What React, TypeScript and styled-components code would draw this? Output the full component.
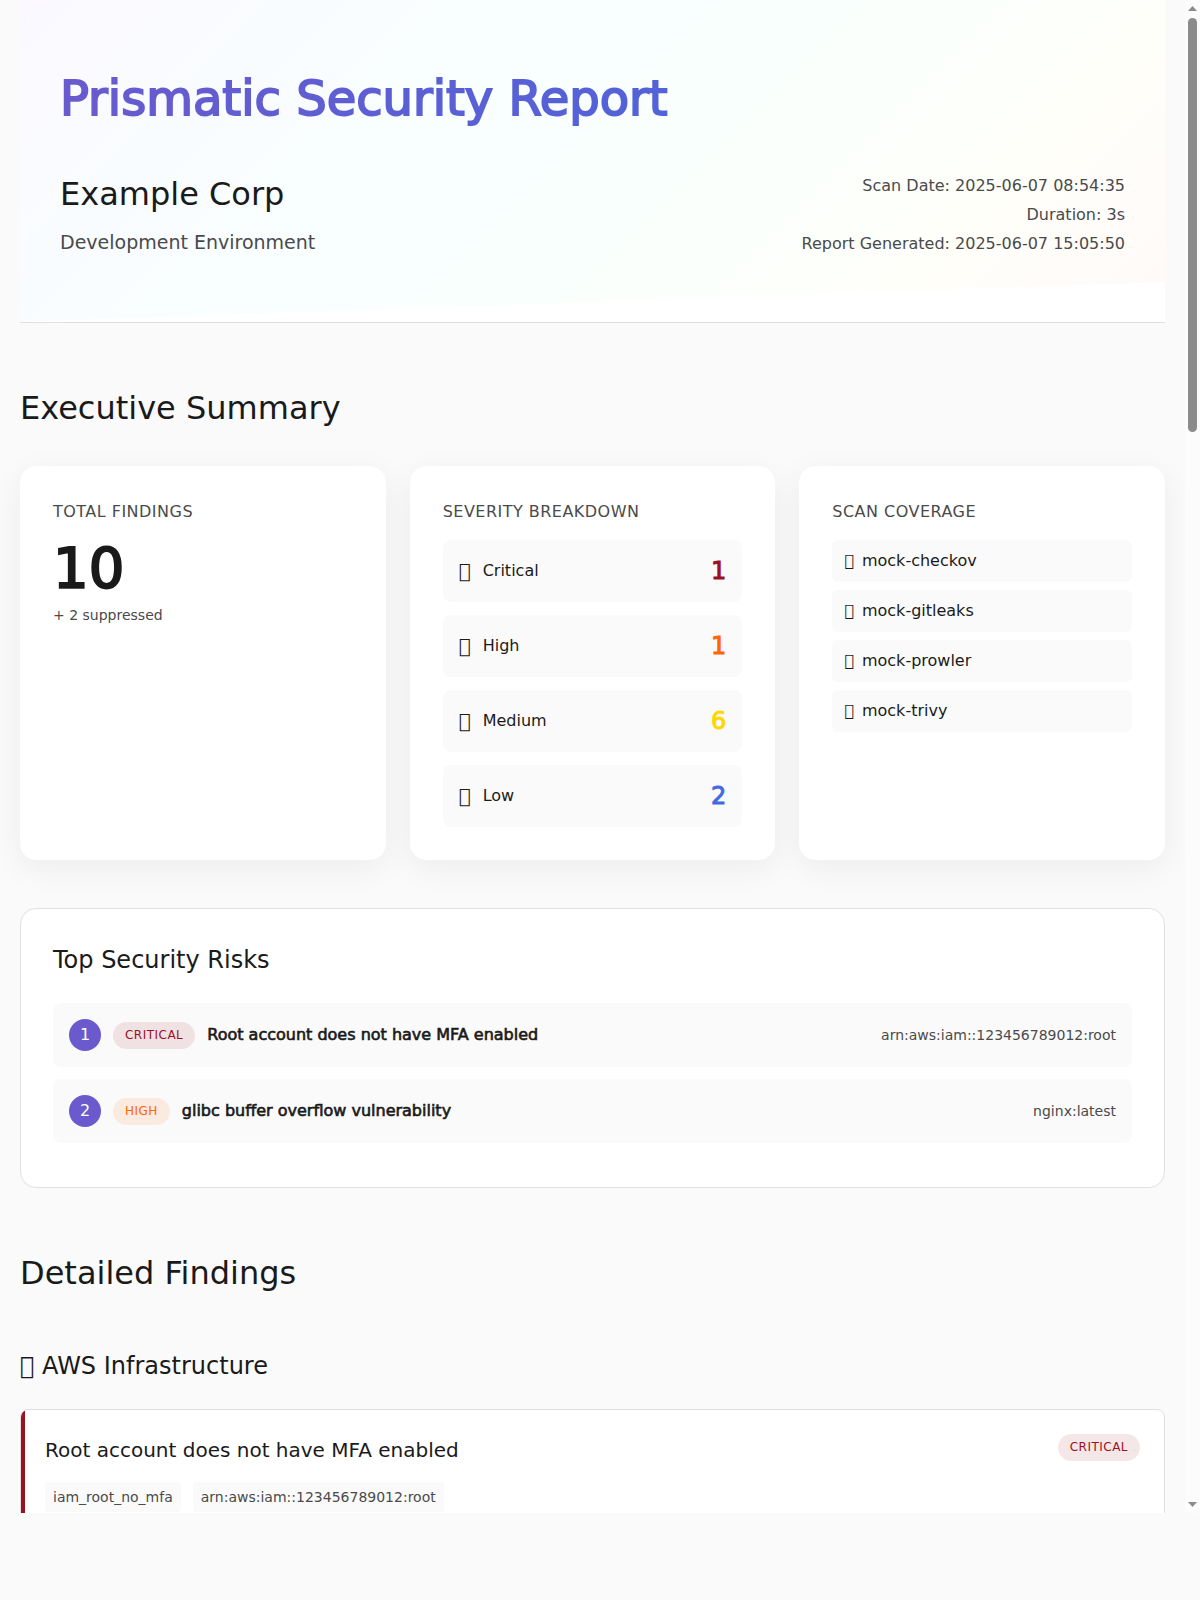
import React from "react";
import styled, { createGlobalStyle, css } from "styled-components";

type Level = "critical" | "high" | "medium" | "low";

const levelColor: Record<Level, string> = {
  critical: "#9b111e",
  high: "#ff6600",
  medium: "#ffd700",
  low: "#4169e1",
};

const levelTint: Record<Level, string> = {
  critical: "rgba(155, 17, 30, 0.1)",
  high: "rgba(255, 102, 0, 0.1)",
  medium: "rgba(255, 215, 0, 0.1)",
  low: "rgba(65, 105, 225, 0.1)",
};

const semibold = css`
  -webkit-text-stroke: 0.04em currentColor;
`;

const GlobalStyle = createGlobalStyle`
  *, *::before, *::after { box-sizing: border-box; }
  body {
    margin: 0;
    background: #fafafa;
    color: #1a1a1a;
    font-family: "DejaVu Sans", sans-serif;
    font-size: 16px;
    line-height: 26px;
  }
  h1, h2, h3, h4, p, ul, ol { margin: 0; padding: 0; font-weight: 400; }
  ul, ol { list-style: none; }
`;

const Frame = styled.div`
  display: flex;
  height: calc(100vh - 87px);
  overflow: hidden;
`;

const Page = styled.main`
  flex: 1;
  min-width: 0;
  padding: 0 20px;
`;

const Header = styled.header`
  position: relative;
  padding: 60px 40px 64px;
  border-bottom: 1px solid #e0e0e0;
  background: linear-gradient(135deg, #fbf9ff 0%, #f9fcff 20%, #f9ffff 40%, #fafffc 60%, #fffffa 80%, #fff9f8 100%);

  &::after {
    content: "";
    position: absolute;
    right: 0;
    bottom: 0;
    left: 0;
    height: 40px;
    background: #ffffff;
    clip-path: polygon(0 100%, 100% 0, 100% 100%);
  }
`;

const ReportTitle = styled.h1`
  ${semibold}
  margin-bottom: 32px;
  color: transparent;
  font-size: 48px;
  line-height: 77px;
  background: linear-gradient(135deg, #6a5acd 0%, #4169e1 100%);
  -webkit-background-clip: text;
  background-clip: text;
`;

const HeaderInfo = styled.div`
  display: flex;
  align-items: flex-end;
  justify-content: space-between;
  gap: 32px;
`;

const Company = styled.h2`
  margin-bottom: 6px;
  font-size: 32px;
  line-height: 51px;
`;

const Environment = styled.p`
  color: #4a4a4a;
  font-size: 19px;
  line-height: 32px;
`;

const ScanMeta = styled.div`
  color: #4a4a4a;
  line-height: 29px;
  text-align: right;
`;

const Section = styled.section`
  margin-top: 60px;
`;

const SectionTitle = styled.h2`
  margin-bottom: 32px;
  font-size: 32px;
  line-height: 51px;
`;

const SummaryGrid = styled.div`
  display: grid;
  grid-template-columns: repeat(auto-fit, minmax(300px, 1fr));
  gap: 24px;
  margin-bottom: 48px;
`;

const SummaryCard = styled.article`
  padding: 32px;
  border: 1px solid #ffffff;
  border-radius: 16px;
  background: #ffffff;
  box-shadow: 0 8px 32px rgba(0, 0, 0, 0.06);
`;

const CardTitle = styled.h3`
  margin-bottom: 15px;
  color: #4a4a4a;
  font-size: 16px;
  letter-spacing: 0.03em;
  text-transform: uppercase;
`;

const Total = styled.p`
  ${semibold}
  margin-bottom: 8px;
  font-size: 56px;
  line-height: 56px;
`;

const Suppressed = styled.p`
  color: #4a4a4a;
  font-size: 14px;
  line-height: 22px;
`;

const RowList = styled.ul<{ $gap: number }>`
  display: grid;
  gap: ${(p) => p.$gap}px;
`;

const SeverityRow = styled.li`
  display: flex;
  align-items: center;
  gap: 12px;
  padding: 12px 16px;
  border-radius: 8px;
  background: #fafafa;
`;

const SeverityIcon = styled.span`
  font-size: 20px;
  line-height: 32px;
`;

const SeverityName = styled.span`
  flex: 1;
`;

const SeverityCount = styled.span<{ $level: Level }>`
  ${semibold}
  color: ${(p) => levelColor[p.$level]};
  font-size: 24px;
  line-height: 38px;
`;

const ScannerRow = styled.li`
  display: flex;
  align-items: center;
  gap: 8px;
  padding: 8px 12px;
  border-radius: 6px;
  background: #fafafa;
`;

const RisksPanel = styled.section`
  padding: 32px;
  border: 1px solid #e0e0e0;
  border-radius: 16px;
  background: #ffffff;
`;

const SubTitle = styled.h3`
  margin-bottom: 24px;
  font-size: 24px;
  line-height: 38px;
`;

const RiskRow = styled.li`
  display: flex;
  align-items: center;
  gap: 12px;
  margin-bottom: 12px;
  padding: 16px;
  border-radius: 8px;
  background: #fafafa;
`;

const RiskRank = styled.span`
  display: flex;
  flex: none;
  align-items: center;
  justify-content: center;
  width: 32px;
  height: 32px;
  border-radius: 50%;
  background: #6a5acd;
  color: #ffffff;
`;

const Badge = styled.span<{ $level: Level }>`
  flex: none;
  padding: 4px 12px;
  border-radius: 20px;
  background: ${(p) => levelTint[p.$level]};
  color: ${(p) => levelColor[p.$level]};
  font-size: 12px;
  letter-spacing: 0.04em;
  line-height: 19px;
  text-transform: uppercase;
`;

const RiskName = styled.span`
  ${semibold}
  flex: 1;
`;

const RiskResource = styled.span`
  color: #4a4a4a;
  font-size: 14px;
  line-height: 22px;
`;

const FindingGroup = styled.div`
  margin-top: 48px;
`;

const FindingCard = styled.article<{ $level: Level }>`
  position: relative;
  padding: 24px;
  overflow: hidden;
  border: 1px solid #e0e0e0;
  border-radius: 8px;
  background: #ffffff;

  &::before {
    content: "";
    position: absolute;
    top: 0;
    bottom: 0;
    left: 0;
    width: 4px;
    background: ${(p) => levelColor[p.$level]};
  }
`;

const FindingHead = styled.div`
  display: flex;
  align-items: flex-start;
  justify-content: space-between;
  gap: 16px;
  margin-bottom: 16px;
`;

const FindingTitle = styled.h4`
  font-size: 20px;
  line-height: 32px;
`;

const TagRow = styled.div`
  display: flex;
  flex-wrap: wrap;
  gap: 12px;
  margin-bottom: 16px;
`;

const Tag = styled.span`
  padding: 4px 8px;
  border-radius: 4px;
  background: #fafafa;
  color: #4a4a4a;
  font-size: 14px;
  line-height: 22px;
`;

const ScrollRail = styled.div`
  display: flex;
  flex: none;
  flex-direction: column;
  align-items: center;
  width: 15px;
  padding: 6px 0;
  background: #fcfcfc;
`;

const ScrollArrow = styled.svg`
  display: block;
  flex: none;
  width: 9px;
  height: 5px;
  fill: #8b8b8b;
`;

const ScrollTrack = styled.div`
  flex: 1;
  width: 9px;
  margin: 7px 0;
`;

const ScrollThumb = styled.div`
  height: 28%;
  border-radius: 5px;
  background: #8b8b8b;
`;

// Private-use code point, shown as the font's empty glyph box.
const GLYPH = "\u{10FFFD}";

const severities: { level: Level; name: string; count: number }[] = [
  { level: "critical", name: "Critical", count: 1 },
  { level: "high", name: "High", count: 1 },
  { level: "medium", name: "Medium", count: 6 },
  { level: "low", name: "Low", count: 2 },
];

const scanners = ["mock-checkov", "mock-gitleaks", "mock-prowler", "mock-trivy"];

const risks: { level: Level; name: string; resource: string }[] = [
  {
    level: "critical",
    name: "Root account does not have MFA enabled",
    resource: "arn:aws:iam::123456789012:root",
  },
  { level: "high", name: "glibc buffer overflow vulnerability", resource: "nginx:latest" },
];

export default function App() {
  return (
    <>
      <GlobalStyle />
      <Frame>
        <Page>
          <Header>
            <ReportTitle>Prismatic Security Report</ReportTitle>
            <HeaderInfo>
              <div>
                <Company>Example Corp</Company>
                <Environment>Development Environment</Environment>
              </div>
              <ScanMeta>
                <p>Scan Date: 2025-06-07 08:54:35</p>
                <p>Duration: 3s</p>
                <p>Report Generated: 2025-06-07 15:05:50</p>
              </ScanMeta>
            </HeaderInfo>
          </Header>

          <Section>
            <SectionTitle>Executive Summary</SectionTitle>
            <SummaryGrid>
              <SummaryCard>
                <CardTitle>Total Findings</CardTitle>
                <Total>10</Total>
                <Suppressed>+ 2 suppressed</Suppressed>
              </SummaryCard>
              <SummaryCard>
                <CardTitle>Severity Breakdown</CardTitle>
                <RowList $gap={13}>
                  {severities.map((s) => (
                    <SeverityRow key={s.level}>
                      <SeverityIcon>{GLYPH}</SeverityIcon>
                      <SeverityName>{s.name}</SeverityName>
                      <SeverityCount $level={s.level}>{s.count}</SeverityCount>
                    </SeverityRow>
                  ))}
                </RowList>
              </SummaryCard>
              <SummaryCard>
                <CardTitle>Scan Coverage</CardTitle>
                <RowList $gap={8}>
                  {scanners.map((name) => (
                    <ScannerRow key={name}>
                      <span>{GLYPH}</span>
                      <span>{name}</span>
                    </ScannerRow>
                  ))}
                </RowList>
              </SummaryCard>
            </SummaryGrid>
            <RisksPanel>
              <SubTitle>Top Security Risks</SubTitle>
              <ol>
                {risks.map((r, i) => (
                  <RiskRow key={r.name}>
                    <RiskRank>{i + 1}</RiskRank>
                    <Badge $level={r.level}>{r.level}</Badge>
                    <RiskName>{r.name}</RiskName>
                    <RiskResource>{r.resource}</RiskResource>
                  </RiskRow>
                ))}
              </ol>
            </RisksPanel>
          </Section>

          <Section>
            <SectionTitle>Detailed Findings</SectionTitle>
            <FindingGroup>
              <SubTitle>{GLYPH} AWS Infrastructure</SubTitle>
              <FindingCard $level="critical">
                <FindingHead>
                  <FindingTitle>Root account does not have MFA enabled</FindingTitle>
                  <Badge $level="critical">critical</Badge>
                </FindingHead>
                <TagRow>
                  <Tag>iam_root_no_mfa</Tag>
                  <Tag>arn:aws:iam::123456789012:root</Tag>
                </TagRow>
              </FindingCard>
            </FindingGroup>
          </Section>
        </Page>
        <ScrollRail aria-hidden="true">
          <ScrollArrow viewBox="0 0 9 5">
            <path d="M4.5 0 9 5H0z" />
          </ScrollArrow>
          <ScrollTrack>
            <ScrollThumb />
          </ScrollTrack>
          <ScrollArrow viewBox="0 0 9 5">
            <path d="M0 0h9L4.500 5z" />
          </ScrollArrow>
        </ScrollRail>
      </Frame>
    </>
  );
}
